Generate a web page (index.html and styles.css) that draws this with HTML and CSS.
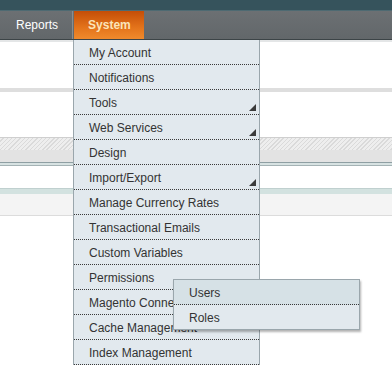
FILE: index.html
```html
<!DOCTYPE html>
<html lang="en">
<head>
    <meta charset="UTF-8">
    <title>System Menu</title>
    <link rel="stylesheet" href="styles.css">
</head>
<body>
    <div class="header"></div>
    <div class="nav">
        <div class="tab">Reports</div>
        <div class="tab active">System</div>
    </div>
    <div class="content">
        <div class="gap g1"></div>
        <div class="rule"></div>
        <div class="gap g2"></div>
        <div class="hatch"></div>
        <div class="grey-band"></div>
        <div class="blue-line"></div>
        <div class="gap g3"></div>
        <div class="teal-band"></div>
        <div class="light-band"></div>
    </div>

    <ul class="dropdown">
        <li>My Account</li>
        <li>Notifications</li>
        <li class="parent">Tools</li>
        <li class="parent">Web Services</li>
        <li>Design</li>
        <li class="parent">Import/Export</li>
        <li>Manage Currency Rates</li>
        <li>Transactional Emails</li>
        <li>Custom Variables</li>
        <li>Permissions</li>
        <li>Magento Connect</li>
        <li>Cache Management</li>
        <li>Index Management</li>
    </ul>

    <ul class="submenu">
        <li class="hover">Users</li>
        <li>Roles</li>
    </ul>
</body>
</html>
```

FILE: styles.css
```css
body {
    margin: 0;
    font-family: "Liberation Sans", Arial, sans-serif;
    font-size: 12px;
    background: #fff;
    position: relative;
    overflow: hidden;
    height: 367px;
}

.header {
    height: 10px;
    background: #36535c;
    border-bottom: 1px solid #4e6a72;
}

.nav {
    display: flex;
    height: 28px;
    background: linear-gradient(#6c7073, #62676a);
    border-bottom: 1px solid #3c4447;
    box-shadow: 0 2px 0 #e4e6e7;
}

.tab {
    color: #fff;
    padding: 1px 14px 0 16px;
    line-height: 27px;
    border-right: 1px solid #8a8e90;
    border-left: 1px solid #7a7e80;
    margin-left: -1px;
}

.tab.active {
    width: 42px;
    padding: 1px 14px 0;
    font-weight: bold;
    color: #fbe4b8;
    background: linear-gradient(#c54e08, #e4741b 60%, #f08a2c);
    border: none;
    margin-left: 1px;
}

.content {
    display: flex;
    flex-direction: column;
}

.g1 { height: 48px; }
.g2 { height: 45px; }
.g3 { height: 22px; }

.rule {
    height: 4px;
    background: #dedede;
}

.hatch {
    height: 12px;
    border-top: 1px solid #cfcfcf;
    background: repeating-linear-gradient(135deg, #eeeeee 0 2px, #dadada 2px 3px);
}

.grey-band {
    height: 12px;
    background: #e3e3e3;
}

.blue-line {
    height: 2px;
    border-top: 1px solid #8f9fa3;
    border-bottom: 1px solid #a5b3b5;
    background: #d7e2e2;
}

.teal-band {
    height: 5px;
    background: #d3e2e0;
    border-top: 1px solid #c0d0cf;
}

.light-band {
    height: 21px;
    background: #f4f4f4;
    border-bottom: 1px solid #dcdcdc;
}

.dropdown,
.submenu {
    list-style: none;
    margin: 0;
    padding: 0;
    position: absolute;
    background: #e2e9ee;
    color: #333;
}

.dropdown {
    left: 73px;
    top: 40px;
    width: 185px;
    border-left: 1px solid #9aa6ac;
    border-right: 1px solid #9aa6ac;
}

.dropdown li,
.submenu li {
    height: 22px;
    line-height: 22px;
    padding: 2px 0 0 15px;
    border-bottom: 1px dotted #3a3a3a;
    position: relative;
}

.dropdown li.parent::after {
    content: "";
    position: absolute;
    right: 3px;
    bottom: 3px;
    width: 0;
    height: 0;
    border-left: 7px solid transparent;
    border-bottom: 7px solid #3b3b3b;
}

.submenu {
    left: 173px;
    top: 279px;
    width: 185px;
    border: 1px solid #9aa6ac;
    box-shadow: 1px 2px 2px rgba(0, 0, 0, 0.3);
}

.submenu li:last-child {
    border-bottom: none;
}

.submenu li.hover {
    background: #d6e1e6;
}
```
